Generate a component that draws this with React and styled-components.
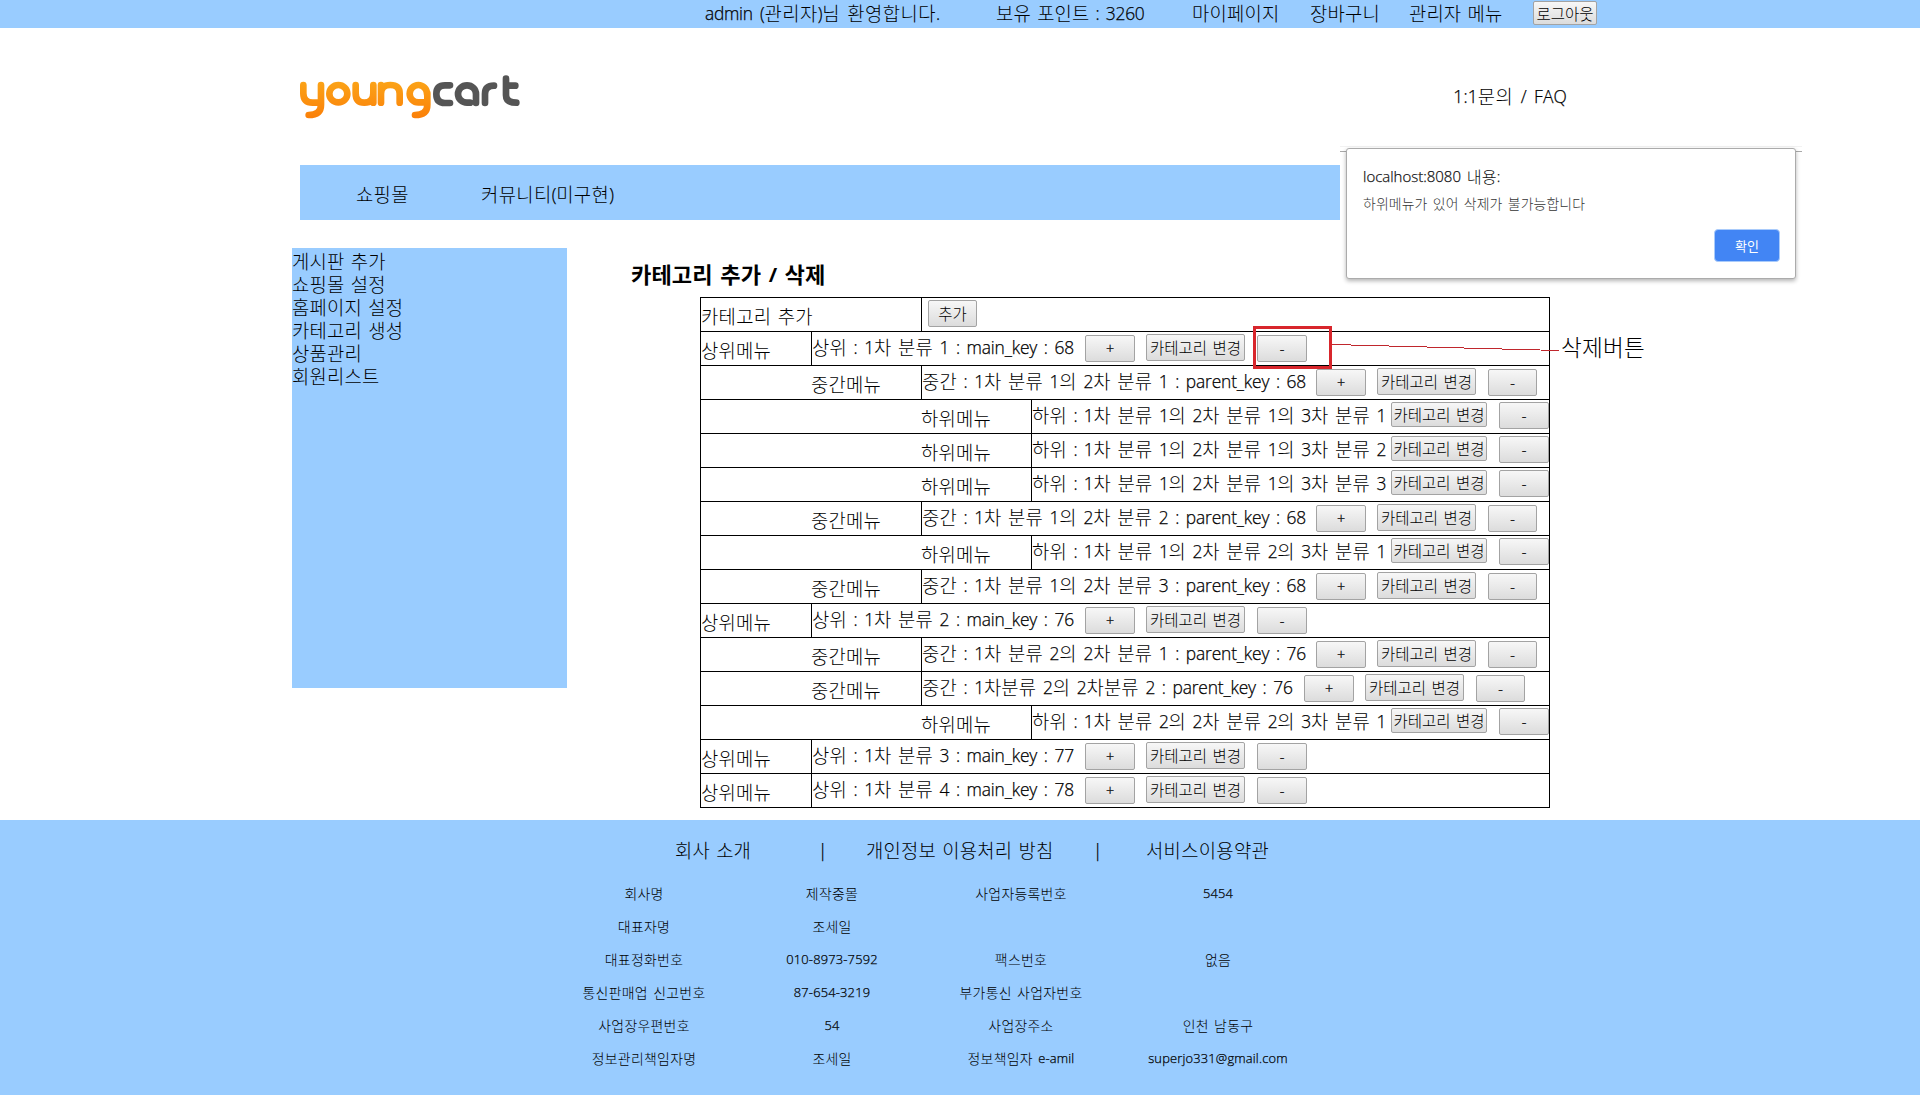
import React from "react";
import styled, { createGlobalStyle } from "styled-components";

const SKY = "#99ccff";

const GlobalStyle = createGlobalStyle`
  *, *::before, *::after { box-sizing: border-box; }
  body {
    margin: 0;
    background: #fff;
    color: #000;
    font-family: "Noto Sans CJK KR", "Open Sans", sans-serif;
    font-weight: 300;
  }
`;

const Line = styled.span`
  display: inline-block;
  font-size: ${(p) => p.$size}px;
  letter-spacing: ${(p) => p.$track}px;
  word-spacing: ${(p) => p.$word}px;
  line-height: 1;
  white-space: pre;
`;

const Latin = styled.span`
  font-family: "Open Sans", "Noto Sans", sans-serif;
  font-size: 0.925em;
  font-weight: ${(p) => (p.$bold ? 700 : 300)};
  letter-spacing: ${(p) => p.$track}em;
  line-height: 0;
  vertical-align: 1px;
  -webkit-text-stroke: ${(p) => (p.$bold ? 0 : 0.25)}px currentColor;
`;

function Text({ children, size = 18.8, track = 0.1, word = 2.1, latinTrack = -0.015, bold = false }) {
  const runs = String(children).match(/[\uac00-\ud7a3]+|[^\uac00-\ud7a3]+/g) || [];
  return (
    <Line $size={size} $track={track} $word={word}>
      {runs.map((run, i) =>
        /[\uac00-\ud7a3]/.test(run) ? run : <Latin key={i} $bold={bold} $track={latinTrack}>{run}</Latin>
      )}
    </Line>
  );
}

const Page = styled.div`
  position: relative;
  display: flex;
  flex-direction: column;
  width: 1920px;
  height: 1095px;
`;

const TopBar = styled.header`
  display: flex;
  align-items: center;
  height: 28px;
  padding: 0 0 2px 705px;
  background: ${SKY};
`;

const TopItem = styled.span`
  display: flex;
  flex: none;
  width: ${(p) => p.$w}px;
`;

const Button = styled.button`
  display: flex;
  flex: none;
  align-items: center;
  justify-content: center;
  width: ${(p) => p.$w || 50}px;
  height: ${(p) => p.$h || 27}px;
  margin: ${(p) => p.$mt || 0}px 0 0 ${(p) => p.$ml || 0}px;
  padding: 1px 0 0;
  border: 1px solid #a3a3a3;
  border-radius: 2px;
  background: linear-gradient(#f7f7f7, #dcdcdc);
  color: #000;
  font-family: inherit;
  font-weight: inherit;
`;

const Header = styled.div`
  display: flex;
  align-items: flex-start;
  justify-content: space-between;
  height: 137px;
  padding: 46px 353px 0 300px;
`;

const HelpLink = styled.div`
  padding-top: 11px;
`;

const Nav = styled.nav`
  display: flex;
  align-items: center;
  width: 1040px;
  height: 55px;
  margin-left: 300px;
  padding: 3px 0 0 56px;
  background: ${SKY};
`;

const NavItem = styled.span`
  width: 125px;
  display: flex;
`;

const Body = styled.main`
  display: flex;
  align-items: flex-start;
  height: 600px;
  padding: 28px 0 0 292px;
`;

const Sidebar = styled.ul`
  flex: none;
  width: 275px;
  height: 440px;
  margin: 0;
  padding: 2px 0 0;
  list-style: none;
  background: ${SKY};
`;

const SideItem = styled.li`
  display: flex;
  align-items: center;
  height: 23px;
`;

const Content = styled.section`
  padding-left: 63px;
`;

const Title = styled.h1`
  display: flex;
  align-items: center;
  height: 49px;
  margin: 0;
  padding: 1px 0 0 1px;
  font-weight: 700;
`;

const Table = styled.div`
  width: 850px;
  margin-left: 70px;
  border: 1px solid #000;
  border-top: 0;
`;

const Row = styled.div`
  display: flex;
  height: 34px;
  border-top: 1px solid #000;
`;

const indent = { add: 0, top: 0, mid: 110, low: 220 };
const labelWidth = { add: 221, top: 111, mid: 221, low: 331 };
const textWidth = { top: 272, mid: 393, low: 358 };

const LabelCell = styled.div`
  display: flex;
  flex: none;
  align-items: center;
  width: ${(p) => labelWidth[p.$level]}px;
  padding: 3px 0 0 ${(p) => indent[p.$level]}px;
  border-right: 1px solid #000;
`;

const DataCell = styled.div`
  display: flex;
  align-items: flex-start;
  padding-top: 2px;
`;

const DataText = styled.div`
  display: flex;
  flex: none;
  width: ${(p) => p.$w + 1}px;
  padding-top: 4px;
`;

const Footer = styled.footer`
  height: 275px;
  padding-top: 17px;
  background: ${SKY};
`;

const FooterLinks = styled.div`
  display: flex;
  align-items: center;
  height: 26px;
  padding-left: 675px;
`;

const FooterGrid = styled.div`
  display: grid;
  grid-template-columns: 188px 188px 190px 204px;
  grid-auto-rows: 33px;
  padding: 14px 0 0 550px;
`;

const FooterCell = styled.div`
  display: flex;
  align-items: center;
  justify-content: center;
`;

const DialogStrip = styled.div`
  position: absolute;
  left: 1340px;
  top: 146px;
  width: 462px;
  height: 138px;
  border-top: 1px solid #f2f2f2;
  background: linear-gradient(#fff 4px, #a9a9a9 4px, #a9a9a9 5px, #fff 5px);
  padding: 1px 6px 0;
`;

const Dialog = styled.div`
  display: flex;
  flex-direction: column;
  width: 450px;
  height: 131px;
  padding: 18px 15px 16px 16px;
  border: 1px solid #ababab;
  border-radius: 3px;
  background: #fff;
  box-shadow: 0 2px 4px rgba(0, 0, 0, 0.3);
`;

const DialogTitle = styled.div`
  display: flex;
  align-items: center;
  height: 18px;
  color: #111;
`;

const DialogMessage = styled.div`
  display: flex;
  align-items: center;
  height: 18px;
  margin-top: 10px;
  color: #333;
`;

const Confirm = styled.button`
  display: flex;
  align-items: center;
  justify-content: center;
  align-self: flex-end;
  width: 66px;
  height: 33px;
  margin-top: auto;
  padding: 0;
  border: 1px solid #a9cbfb;
  border-radius: 4px;
  background: #4285f4;
  color: #fff;
  font-family: inherit;
  font-weight: 400;
`;

const RedBox = styled.div`
  position: absolute;
  left: 1253px;
  top: 326px;
  width: 79px;
  height: 43px;
  border: 3px solid #d8262c;
`;

const Pointer = styled.svg`
  position: absolute;
  left: 1332px;
  top: 340px;
`;

const Note = styled.div`
  position: absolute;
  left: 1561px;
  top: 336px;
  display: flex;
`;

function Logo() {
  return (
    <svg width="222" height="47" viewBox="60 40 666 141" fill="none" strokeWidth="20" strokeLinecap="round">
      <defs>
        <linearGradient id="orange" gradientUnits="userSpaceOnUse" x1="60" y1="60" x2="60" y2="175">
          <stop offset="0" stopColor="#fba418" />
          <stop offset="1" stopColor="#fb7f08" />
        </linearGradient>
      </defs>
      <g stroke="url(#orange)">
        <path d="M70 73V98Q70 126 98 126H122M123 73V132Q123 163 86 163" />
        <ellipse cx="175" cy="99" rx="27" ry="26" />
        <path d="M227 73V98Q227 126 253 126Q280 126 280 98V73M280 98V126" />
        <path d="M303 126V73M303 99Q303 73 331 73Q359 73 359 99V126" />
        <path d="M441 99A26 26 0 1 0 415 125H441M442 97V132Q442 163 405 163" />
      </g>
      <g stroke="#555">
        <path d="M510 74H495Q469 74 469 100Q469 127 495 127H510" />
        <path d="M588 127V100A27 26 0 1 0 561 126H570" />
        <path d="M615 127V100Q615 75 642 75" />
        <path d="M678 54V104Q678 126 709 126M678 75H706" />
      </g>
    </svg>
  );
}

const menu = ["게시판 추가", "쇼핑몰 설정", "홈페이지 설정", "카테고리 생성", "상품관리", "회원리스트"];

const labels = { top: "상위메뉴", mid: "중간메뉴", low: "하위메뉴" };

const categories = [
  { level: "top", text: "상위 : 1차 분류 1 : main_key : 68" },
  { level: "mid", text: "중간 : 1차 분류 1의 2차 분류 1 : parent_key : 68" },
  { level: "low", text: "하위 : 1차 분류 1의 2차 분류 1의 3차 분류 1" },
  { level: "low", text: "하위 : 1차 분류 1의 2차 분류 1의 3차 분류 2" },
  { level: "low", text: "하위 : 1차 분류 1의 2차 분류 1의 3차 분류 3" },
  { level: "mid", text: "중간 : 1차 분류 1의 2차 분류 2 : parent_key : 68" },
  { level: "low", text: "하위 : 1차 분류 1의 2차 분류 2의 3차 분류 1" },
  { level: "mid", text: "중간 : 1차 분류 1의 2차 분류 3 : parent_key : 68" },
  { level: "top", text: "상위 : 1차 분류 2 : main_key : 76" },
  { level: "mid", text: "중간 : 1차 분류 2의 2차 분류 1 : parent_key : 76" },
  { level: "mid", text: "중간 : 1차분류 2의 2차분류 2 : parent_key : 76", width: 381 },
  { level: "low", text: "하위 : 1차 분류 2의 2차 분류 2의 3차 분류 1" },
  { level: "top", text: "상위 : 1차 분류 3 : main_key : 77" },
  { level: "top", text: "상위 : 1차 분류 4 : main_key : 78" },
];

const company = [
  ["회사명", "제작중몰", "사업자등록번호", "5454"],
  ["대표자명", "조세일", "", ""],
  ["대표정화번호", "010-8973-7592", "팩스번호", "없음"],
  ["통신판매업 신고번호", "87-654-3219", "부가통신 사업자번호", ""],
  ["사업장우편번호", "54", "사업장주소", "인천 남동구"],
  ["정보관리책임자명", "조세일", "정보책임자 e-amil", "superjo331@gmail.com"],
];

function ButtonText({ children }) {
  return <Text size={15.5} track={0} word={2}>{children}</Text>;
}

function CategoryRow({ level, text, width }) {
  const low = level === "low";
  return (
    <Row>
      <LabelCell $level={level}><Text track={0.2}>{labels[level]}</Text></LabelCell>
      <DataCell>
        <DataText $w={width || textWidth[level]}>
          <Text track={0.15} word={2.3} latinTrack={low ? -0.015 : -0.009}>{text}</Text>
        </DataText>
        {!low && <Button $mt={1}><ButtonText>+</ButtonText></Button>}
        <Button $w={low ? 96 : 99} $h={low ? 25 : 27} $ml={low ? 0 : 11}>
          <ButtonText>카테고리 변경</ButtonText>
        </Button>
        <Button $w={level === "mid" ? 49 : 50} $mt={low ? 0 : 1} $ml={12}>
          <ButtonText>-</ButtonText>
        </Button>
      </DataCell>
    </Row>
  );
}

export default function App() {
  return (
    <Page>
      <GlobalStyle />
      <TopBar>
        <TopItem $w={291}><Text track={0.5} word={2.9}>admin (관리자)님 환영합니다.</Text></TopItem>
        <TopItem $w={196}><Text>보유 포인트 : 3260</Text></TopItem>
        <TopItem $w={118}><Text track={0.2}>마이페이지</Text></TopItem>
        <TopItem $w={99}><Text track={0.2}>장바구니</Text></TopItem>
        <TopItem $w={124}><Text>관리자 메뉴</Text></TopItem>
        <Button $w={64} $h={24}><ButtonText>로그아웃</ButtonText></Button>
      </TopBar>
      <Header>
        <Logo />
        <HelpLink><Text track={0.5} word={2.6} latinTrack={0.01}>1:1문의 / FAQ</Text></HelpLink>
      </Header>
      <Nav>
        <NavItem><Text track={0.3}>쇼핑몰</Text></NavItem>
        <NavItem><Text track={0.4}>커뮤니티(미구현)</Text></NavItem>
      </Nav>
      <Body>
        <Sidebar>
          {menu.map((m) => <SideItem key={m}><Text track={0.2}>{m}</Text></SideItem>)}
        </Sidebar>
        <Content>
          <Title><Text size={22.1} word={2.6} bold>카테고리 추가 / 삭제</Text></Title>
          <Table>
            <Row>
              <LabelCell $level="add"><Text track={0.3}>카테고리 추가</Text></LabelCell>
              <DataCell><Button $w={49} $ml={6}><ButtonText>추가</ButtonText></Button></DataCell>
            </Row>
            {categories.map((c, i) => <CategoryRow key={i} {...c} />)}
          </Table>
        </Content>
      </Body>
      <Footer>
        <FooterLinks>
          <TopItem $w={143}><Text>회사 소개</Text></TopItem>
          <TopItem $w={48}><Text>|</Text></TopItem>
          <TopItem $w={227}><Text track={0.2}>개인정보 이용처리 방침</Text></TopItem>
          <TopItem $w={53}><Text>|</Text></TopItem>
          <TopItem $w={130}><Text track={0.3}>서비스이용약관</Text></TopItem>
        </FooterLinks>
        <FooterGrid>
          {company.flat().map((c, i) => (
            <FooterCell key={i}>
              <Text size={13.9} track={0.3} word={1.7} latinTrack={0.015}>{c}</Text>
            </FooterCell>
          ))}
        </FooterGrid>
      </Footer>
      <DialogStrip>
        <Dialog>
          <DialogTitle><Text size={16.2} word={2} latinTrack={0}>localhost:8080 내용:</Text></DialogTitle>
          <DialogMessage><Text size={13.9} word={2.2}>하위메뉴가 있어 삭제가 불가능합니다</Text></DialogMessage>
          <Confirm><Text size={13}>확인</Text></Confirm>
        </Dialog>
      </DialogStrip>
      <RedBox />
      <Pointer width="228" height="14" viewBox="0 0 228 14" shapeRendering="crispEdges">
        <path d="M0 4.5L227 10.5" stroke="#c0272d" fill="none" />
      </Pointer>
      <Note><Text size={22.6} track={0.2}>삭제버튼</Text></Note>
    </Page>
  );
}
